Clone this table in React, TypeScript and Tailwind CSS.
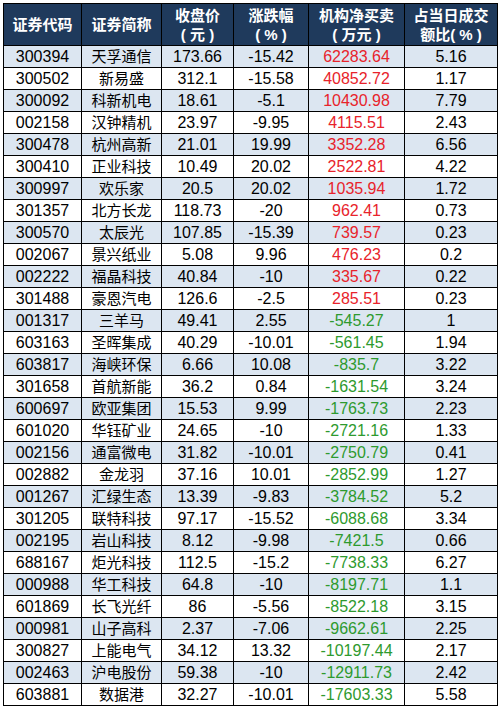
const rows: [string, string, string, string, string, string][] = [
  ["300394", "天孚通信", "173.66", "-15.42", "62283.64", "5.16"],
  ["300502", "新易盛", "312.1", "-15.58", "40852.72", "1.17"],
  ["300092", "科新机电", "18.61", "-5.1", "10430.98", "7.79"],
  ["002158", "汉钟精机", "23.97", "-9.95", "4115.51", "2.43"],
  ["300478", "杭州高新", "21.01", "19.99", "3352.28", "6.56"],
  ["300410", "正业科技", "10.49", "20.02", "2522.81", "4.22"],
  ["300997", "欢乐家", "20.5", "20.02", "1035.94", "1.72"],
  ["301357", "北方长龙", "118.73", "-20", "962.41", "0.73"],
  ["300570", "太辰光", "107.85", "-15.39", "739.57", "0.23"],
  ["002067", "景兴纸业", "5.08", "9.96", "476.23", "0.2"],
  ["002222", "福晶科技", "40.84", "-10", "335.67", "0.22"],
  ["301488", "豪恩汽电", "126.6", "-2.5", "285.51", "0.23"],
  ["001317", "三羊马", "49.41", "2.55", "-545.27", "1"],
  ["603163", "圣晖集成", "40.29", "-10.01", "-561.45", "1.94"],
  ["603817", "海峡环保", "6.66", "10.08", "-835.7", "3.22"],
  ["301658", "首航新能", "36.2", "0.84", "-1631.54", "3.24"],
  ["600697", "欧亚集团", "15.53", "9.99", "-1763.73", "2.23"],
  ["601020", "华钰矿业", "24.65", "-10", "-2721.16", "1.33"],
  ["002156", "通富微电", "31.82", "-10.01", "-2750.79", "0.41"],
  ["002882", "金龙羽", "37.16", "10.01", "-2852.99", "1.27"],
  ["001267", "汇绿生态", "13.39", "-9.83", "-3784.52", "5.2"],
  ["301205", "联特科技", "97.17", "-15.52", "-6088.68", "3.34"],
  ["002195", "岩山科技", "8.12", "-9.98", "-7421.5", "0.66"],
  ["688167", "炬光科技", "112.5", "-15.2", "-7738.33", "6.27"],
  ["000988", "华工科技", "64.8", "-10", "-8197.71", "1.1"],
  ["601869", "长飞光纤", "86", "-5.56", "-8522.18", "3.15"],
  ["000981", "山子高科", "2.37", "-7.06", "-9662.61", "2.25"],
  ["300827", "上能电气", "34.12", "13.32", "-10197.44", "2.17"],
  ["002463", "沪电股份", "59.38", "-10", "-12911.73", "2.42"],
  ["603881", "数据港", "32.27", "-10.01", "-17603.33", "5.58"],
];

const font = { fontFamily: '"Liberation Sans", "Noto Sans CJK SC", sans-serif' };

// 表格单元格公共样式
const cell = "border border-black text-center p-0 leading-[21px]";

export default function App() {
  return (
    <div className="w-[501px] h-[711px] bg-white pt-[3px] pl-[3px]" style={font}>
      <table className="border-collapse table-fixed w-[494px] text-[16px] text-black">
        <colgroup>
          <col className="w-[78px]" />
          <col className="w-[80px]" />
          <col className="w-[72px]" />
          <col className="w-[75px]" />
          <col className="w-[96px]" />
          <col className="w-[93px]" />
        </colgroup>
        <thead>
          <tr className="h-[42px] bg-[#1f3a5c] text-white font-bold text-[15px] leading-[19px]">
            <th className="border border-black">证券代码</th>
            <th className="border border-black">证券简称</th>
            <th className="border border-black">
              收盘价
              <br />( 元 )
            </th>
            <th className="border border-black">
              涨跌幅
              <br />( % )
            </th>
            <th className="border border-black">
              机构净买卖
              <br />( 万元 )
            </th>
            <th className="border border-black">
              占当日成交
              <br />额比( % )
            </th>
          </tr>
        </thead>
        <tbody>
          {rows.map((r, i) => {
            const neg = r[4].startsWith("-");
            return (
              <tr key={r[0]} className={i % 2 === 0 ? "h-[22px] bg-[#dce6f1]" : "h-[22px] bg-white"}>
                <td className={cell}>{r[0]}</td>
                <td className={cell + " text-[15px]"}>{r[1]}</td>
                <td className={cell}>{r[2]}</td>
                <td className={cell}>{r[3]}</td>
                <td className={neg ? cell + " text-[#2e9a2e]" : cell + " text-[#e8232b]"}>{r[4]}</td>
                <td className={cell}>{r[5]}</td>
              </tr>
            );
          })}
        </tbody>
      </table>
    </div>
  );
}
